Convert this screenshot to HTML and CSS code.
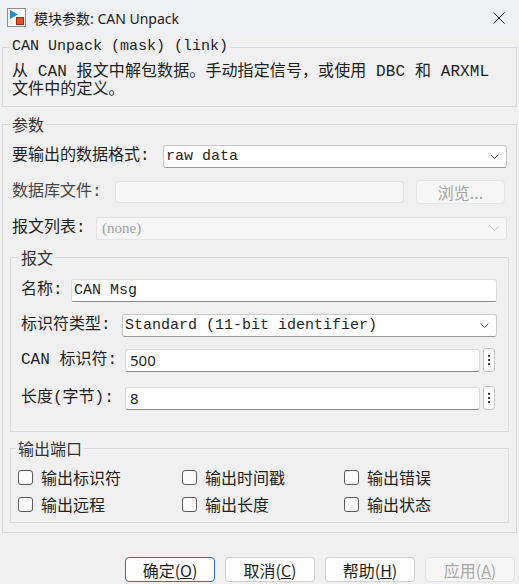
FILE: index.html
```html
<!DOCTYPE html>
<html lang="zh-CN">
  <head>
    <meta charset="UTF-8">
    <title>模块参数: CAN Unpack</title>
    <link rel="stylesheet" href="styles.css">
  </head>
  <body>
    <div class="titlebar">
      <svg class="app-icon" viewBox="0 0 19 19">
        <rect x="0.5" y="0.5" width="18" height="18" fill="#f7f7f7" stroke="#8e8e8e"/>
        <path d="M3 2 L11 6.5 L3 11 Z" fill="#1f8fd6"/>
        <rect x="9.5" y="9.5" width="7" height="7" fill="#e8501e" stroke="#9b2a0b"/>
      </svg>
      <span class="title">模块参数: CAN Unpack</span>
      <svg class="close" viewBox="0 0 12 12">
        <path d="M0.5 0.5 L11.5 11.5 M11.5 0.5 L0.5 11.5" stroke="#1a1a1a" stroke-width="1"/>
      </svg>
    </div>

    <div class="dialog">
      <fieldset class="group desc">
        <legend class="mono-legend">CAN Unpack (mask) (link)</legend>
        <p class="desc-text">从 CAN 报文中解包数据。手动指定信号，或使用 DBC 和 ARXML<br>文件中的定义。</p>
      </fieldset>

      <fieldset class="group params">
        <legend>参数</legend>
        <div class="rows">
          <div class="row">
            <span class="label w-format">要输出的数据格式:</span>
            <div class="select">
              <span class="value mono">raw data</span>
              <svg class="chev" viewBox="0 0 9 5"><polyline points="0.5,0.5 4.5,4.5 8.5,0.5" fill="none" stroke="#555" stroke-width="1"/></svg>
            </div>
          </div>
          <div class="row">
            <span class="label w-db dim">数据库文件:</span>
            <div class="field disabled"></div>
            <div class="browse">浏览...</div>
          </div>
          <div class="row">
            <span class="label w-list">报文列表:</span>
            <div class="select disabled">
              <span class="value none">(none)</span>
              <svg class="chev" viewBox="0 0 9 5"><polyline points="0.5,0.5 4.5,4.5 8.5,0.5" fill="none" stroke="#c4c4c4" stroke-width="1"/></svg>
            </div>
          </div>
        </div>

        <fieldset class="group sub msg">
          <legend>报文</legend>
          <div class="rows tight">
            <div class="row">
              <span class="label w-name">名称:</span>
              <div class="field"><span class="value mono">CAN Msg</span></div>
            </div>
            <div class="row">
              <span class="label w-type">标识符类型:</span>
              <div class="select">
                <span class="value mono">Standard (11-bit identifier)</span>
                <svg class="chev" viewBox="0 0 9 5"><polyline points="0.5,0.5 4.5,4.5 8.5,0.5" fill="none" stroke="#555" stroke-width="1"/></svg>
              </div>
            </div>
            <div class="row">
              <span class="label w-id">CAN 标识符:</span>
              <div class="field"><span class="value sans">500</span></div>
              <div class="spin">
                <svg viewBox="0 0 12 24"><circle cx="6" cy="7" r="1.3"/><circle cx="6" cy="12" r="1.3"/><circle cx="6" cy="17" r="1.3"/></svg>
              </div>
            </div>
            <div class="row last">
              <span class="label w-id">长度(字节):</span>
              <div class="field"><span class="value sans">8</span></div>
              <div class="spin">
                <svg viewBox="0 0 12 24"><circle cx="6" cy="7" r="1.3"/><circle cx="6" cy="12" r="1.3"/><circle cx="6" cy="17" r="1.3"/></svg>
              </div>
            </div>
          </div>
        </fieldset>

        <fieldset class="group sub ports">
          <legend>输出端口</legend>
          <div class="checks">
            <div class="check"><span class="box"></span>输出标识符</div>
            <div class="check"><span class="box"></span>输出时间戳</div>
            <div class="check"><span class="box"></span>输出错误</div>
            <div class="check"><span class="box"></span>输出远程</div>
            <div class="check"><span class="box"></span>输出长度</div>
            <div class="check"><span class="box"></span>输出状态</div>
          </div>
        </fieldset>
      </fieldset>

      <div class="buttons">
        <div class="btn default">确定(<u>O</u>)</div>
        <div class="btn">取消(<u>C</u>)</div>
        <div class="btn">帮助(<u>H</u>)</div>
        <div class="btn off">应用(<u>A</u>)</div>
      </div>
    </div>
  </body>
</html>
```

FILE: styles.css
```css
* {
  box-sizing: border-box;
}

body {
  margin: 0;
  width: 519px;
  height: 584px;
  overflow: hidden;
  background-color: #f0f0f0;
  font-family: "Noto Sans CJK SC", "Noto Sans", sans-serif;
  font-size: 16px;
  color: #1f1f1f;
}

.titlebar {
  height: 35px;
  display: flex;
  align-items: center;
  padding: 0 14px 0 7px;
  background-color: #eff0f4;
}

.app-icon {
  width: 19px;
  height: 19px;
  margin-right: 8px;
}

.title {
  flex: 1;
  font-family: "Noto Sans", "Noto Sans CJK SC", sans-serif;
  font-size: 14px;
  color: #1a1a1a;
}

.close {
  width: 12px;
  height: 12px;
}

.dialog {
  padding: 3px 2px 0 2px;
}

.group {
  margin: 0;
  min-width: 0;
  border: 1px solid #d9d9d9;
  padding: 7px 9px;
}

.group legend {
  padding: 0 2px;
  margin-left: -2px;
  line-height: 18px;
  font-size: 16px;
  color: #333;
}

.group .mono-legend {
  font-family: "Liberation Mono", "Noto Sans CJK SC", monospace;
  font-size: 15px;
  color: #222;
}

.desc-text {
  margin: 0;
  font-family: "Liberation Mono", "Noto Sans CJK SC", monospace;
  font-size: 16px;
  letter-spacing: 0.1px;
  line-height: 18px;
  color: #222;
}

.params {
  margin-top: 8px;
  padding: 11px 9px 9px 9px;
}

.rows {
  display: flex;
  flex-direction: column;
  gap: 12px;
}

.rows.tight {
  gap: 11px;
}

.row {
  height: 24px;
  display: flex;
  align-items: center;
}

.row.last {
  margin-top: 3px;
}

.label {
  flex: none;
  font-family: "Liberation Mono", "Noto Sans CJK SC", monospace;
  font-size: 16px;
  line-height: 24px;
  white-space: nowrap;
  color: #1f1f1f;
}

.label.dim {
  color: #474747;
}

.w-format { width: 151px; }
.w-db { width: 103px; }
.w-list { width: 84px; }
.w-name { width: 50px; }
.w-type { width: 101px; }
.w-id { width: 104px; }

.select,
.field {
  flex: 1;
  min-width: 0;
  height: 23px;
  display: flex;
  align-items: center;
  padding: 0 7px 0 2px;
  background-color: #fff;
  border: 1px solid #dcdcdc;
  border-bottom-color: #8c8c8c;
  border-radius: 3px;
}

.select {
  border-color: #c9c9c9;
  border-bottom-color: #9a9a9a;
}

.select.disabled,
.field.disabled {
  background-color: #f6f6f6;
  border-color: #e3e3e3;
}

.field.disabled {
  height: 22px;
}

.select.disabled {
  padding-left: 5px;
  height: 23px;
}

.value {
  flex: 1;
  white-space: nowrap;
  overflow: hidden;
}

.mono {
  font-family: "Liberation Mono", monospace;
  font-size: 15px;
}

.sans {
  font-family: "Noto Sans", sans-serif;
  font-size: 15px;
  padding-left: 2px;
}

.none {
  font-family: "Liberation Serif", serif;
  font-size: 15px;
  color: #a0a0a0;
}

.chev {
  width: 9px;
  height: 5px;
  flex: none;
}

.browse {
  flex: none;
  width: 89px;
  height: 24px;
  margin-left: 12px;
  margin-right: 2px;
  display: flex;
  align-items: center;
  justify-content: center;
  background-color: #f6f6f6;
  border: 1px solid #e6e6e6;
  border-radius: 4px;
  color: #a3a3a3;
}

.spin {
  flex: none;
  width: 12px;
  height: 24px;
  margin-left: 3px;
  margin-right: 2px;
  background-color: #fdfdfd;
  border: 1px solid #c6c6c6;
  border-radius: 3px;
}

.spin svg {
  display: block;
  width: 10px;
  height: 22px;
  fill: #111;
}

.sub {
  margin: 0 -2px;
}

.msg {
  margin-top: 8px;
  padding: 12px 11px 21px 10px;
}

.ports {
  margin-top: 7px;
  padding: 10px 9px 8px 7px;
}

.checks {
  display: grid;
  grid-template-columns: 164px 162px 1fr;
  row-gap: 7px;
}

.check {
  height: 20px;
  display: flex;
  align-items: center;
  gap: 8px;
  font-size: 16px;
  color: #222;
}

.box {
  width: 15px;
  height: 15px;
  background-color: #fbfbfb;
  border: 1px solid #5c5c5c;
  border-radius: 3px;
}

.buttons {
  margin-top: 24px;
  padding-right: 2px;
  display: flex;
  justify-content: flex-end;
  gap: 10px;
}

.btn {
  width: 90px;
  height: 25px;
  display: flex;
  align-items: center;
  justify-content: center;
  font-size: 16px;
  color: #1f1f1f;
  background-color: #fdfdfd;
  border: 1px solid #d0d0d0;
  border-radius: 4px;
}

.btn.default {
  border-color: #2a72c4;
}

.btn.off {
  background-color: #f6f6f6;
  border-color: #e3e3e3;
  color: #a8a8a8;
}
```
